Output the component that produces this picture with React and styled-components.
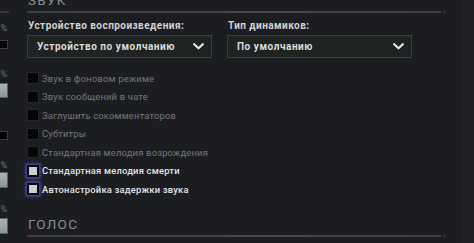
import React from "react";
import styled, { createGlobalStyle } from "styled-components";

const Global = createGlobalStyle`
  html, body { margin: 0; padding: 0; background: #1c1d21; }
  body { width: 474px; height: 243px; overflow: hidden; }
`;

const Page = styled.div`
  display: flex;
  width: 474px;
  height: 243px;
  overflow: hidden;
  background: #1c1d21;
  font-family: Roboto, "Liberation Sans", sans-serif;
`;

const SideColumn = styled.div`
  width: 9px;
  flex: none;
  display: flex;
  flex-direction: column;
  align-items: flex-end;
  overflow: hidden;
`;

const SideLine = styled.div`
  width: 20px;
  height: 2px;
  margin-top: 11px;
  background: #34363a;
`;

const SidePercent = styled.div`
  margin-top: ${(p) => p.$mt}px;
  margin-right: 2px;
  font-size: 9px;
  line-height: 9px;
  height: 9px;
  color: #6f7174;
  white-space: nowrap;
`;

const SideBox = styled.div`
  margin-top: ${(p) => p.$mt}px;
  width: 20px;
  height: ${(p) => p.$h}px;
  box-sizing: border-box;
  border: 1px solid ${(p) => (p.$light ? "#5a6066" : "#3a3c3f")};
  background: ${(p) =>
    p.$light ? "linear-gradient(180deg, #a9b3ba 0%, #8c959c 100%)" : "#050506"};
  margin-right: 1px;
`;

const Main = styled.div`
  margin-left: 18px;
  width: 416px;
  flex: none;
  display: flex;
  flex-direction: column;
`;

const SectionTitle = styled.div`
  margin-top: ${(p) => p.$mt}px;
  font-size: 13.5px;
  line-height: 16px;
  height: 16px;
  letter-spacing: 1.3px;
  color: #8b8d90;
  font-weight: 400;
  padding-left: 1px;
`;

const Divider = styled.div`
  position: relative;
  margin-top: ${(p) => p.$mt}px;
  width: 414px;
  height: 2px;
  background: linear-gradient(90deg, #3c3e42 0%, #45474b 60%, #3c3e42 100%);
  &::after {
    content: "";
    position: absolute;
    right: -5px;
    top: -1px;
    width: 4px;
    height: 4px;
    border-radius: 50%;
    background: #2a2b2f;
  }
`;

const SelectRow = styled.div`
  display: grid;
  grid-template-columns: 185px 185px;
  column-gap: 15px;
  margin-top: 6px;
`;

const Field = styled.div`
  display: flex;
  flex-direction: column;
`;

const Label = styled.div`
  font-size: 10px;
  line-height: 14px;
  font-weight: 700;
  letter-spacing: 0.45px;
  color: #d2d3d4;
  padding-left: 1px;
  white-space: nowrap;
`;

const Select = styled.div`
  margin-top: 2px;
  height: 23px;
  box-sizing: border-box;
  border: 1px solid #3b403f;
  background: #1f2423;
  display: flex;
  align-items: center;
  justify-content: space-between;
  padding: 0 7px 0 9px;
  font-size: 10px;
  font-weight: 700;
  letter-spacing: 0.55px;
  color: #dcdddd;
  white-space: nowrap;
`;

const Chevron = () => (
  <svg width="11" height="7" viewBox="0 0 11 7">
    <path d="M1.2 1.2 L5.5 5.3 L9.8 1.2" fill="none" stroke="#e6e6e6" strokeWidth="2.2" strokeLinecap="round" strokeLinejoin="round" />
  </svg>
);

const CheckList = styled.div`
  display: flex;
  flex-direction: column;
  margin-top: 13px;
  row-gap: 4px;
`;

const CheckRow = styled.div`
  display: flex;
  align-items: center;
  height: 14.5px;
  gap: 3px;
`;

const Box = styled.div`
  width: 12px;
  height: 12px;
  box-sizing: border-box;
  flex: none;
  ${(p) =>
    p.$active
      ? `border: 2px solid #07070c; background: #c9d0cf; box-shadow: 0 0 0 1.5px #3d3f86, 0 0 4px 1px #4a4ca0;`
      : `border: 1px solid #26272a; background: #060607;`}
`;

const CheckText = styled.span`
  font-size: 9.4px;
  letter-spacing: 0.2px;
  font-weight: ${(p) => (p.$active ? 500 : 400)};
  color: ${(p) => (p.$active ? "#e2e3e4" : "#76787b")};
  white-space: nowrap;
`;

const RightStrip = styled.div`
  margin-left: auto;
  width: 11px;
  flex: none;
  background: #1f2125;
`;

const options = [
  ["Звук в фоновом режиме", false],
  ["Звук сообщений в чате", false],
  ["Заглушить сокомментаторов", false],
  ["Субтитры", false],
  ["Стандартная мелодия возрождения", false],
  ["Стандартная мелодия смерти", true],
  ["Автонастройка задержки звука", true],
];

export default function App() {
  return (
    <Page>
      <Global />
      <SideColumn>
        <SideLine />
        <SidePercent $mt={11}>%</SidePercent>
        <SideBox $mt={7} $h={9} />
        <SidePercent $mt={21}>%</SidePercent>
        <SideBox $mt={4} $h={15} $light />
        <SideBox $mt={33} $h={9} />
        <SidePercent $mt={21}>%</SidePercent>
        <SideBox $mt={2} $h={16} $light />
        <SidePercent $mt={17}>%</SidePercent>
        <SideBox $mt={4} $h={16} $light />
      </SideColumn>
      <Main>
        <SectionTitle $mt={-8}>ЗВУК</SectionTitle>
        <Divider $mt={3} />
        <SelectRow>
          <Field>
            <Label>Устройство воспроизведения:</Label>
            <Select>
              <span>Устройство по умолчанию</span>
              <Chevron />
            </Select>
          </Field>
          <Field>
            <Label>Тип динамиков:</Label>
            <Select>
              <span>По умолчанию</span>
              <Chevron />
            </Select>
          </Field>
        </SelectRow>
        <CheckList>
          {options.map(([t, a]) => (
            <CheckRow key={t}>
              <Box $active={a} />
              <CheckText $active={a}>{t}</CheckText>
            </CheckRow>
          ))}
        </CheckList>
        <SectionTitle $mt={19}>ГОЛОС</SectionTitle>
        <Divider $mt={3} />
      </Main>
      <RightStrip />
    </Page>
  );
}
